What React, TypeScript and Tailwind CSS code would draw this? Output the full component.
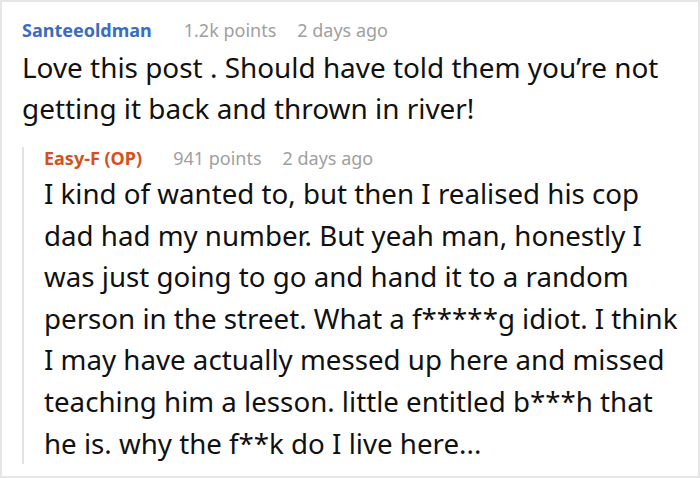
import React from 'react';

const font = { fontFamily: '"Noto Sans", "Open Sans", sans-serif' };

const App: React.FC = () => {
  return (
    <div className="w-[700px] h-[478px] bg-white border-2 border-[#e6e6e6] overflow-hidden" style={font}>
      <div className="pl-[20px] pt-[14px] pr-2">
        {/* Top comment */}
        <div className="flex items-baseline text-[18px] leading-[28px]">
          <span className="font-bold text-[#3b6cc2]">Santeeoldman</span>
          <span className="ml-[32px] text-[#a0a0a0]">1.2k points</span>
          <span className="ml-[21px] text-[#a0a0a0]">2 days ago</span>
        </div>
        <p className="mt-[3px] text-[27.9px] leading-[41px] text-[#111]">
          Love this post . Should have told them you’re not getting it back and thrown in river!
        </p>

        {/* Reply */}
        <div className="mt-[18px] border-l-2 border-[#e3e3e3] pl-[20px]">
          <div className="flex items-baseline text-[18px] leading-[22px]">
            <span className="font-bold text-[#d4501c]">Easy-F (OP)</span>
            <span className="ml-[31px] text-[#a0a0a0]">941 points</span>
            <span className="ml-[21px] text-[#a0a0a0]">2 days ago</span>
          </div>
          <p className="mt-[4px] text-[27.7px] leading-[41.6px] text-[#111]">
            I kind of wanted to, but then I realised his cop dad had my number. But yeah man, honestly I was just going to go and hand it to a random person in the street. What a f*****g idiot. I think I may have actually messed up here and missed teaching him a lesson. little entitled b***h that he is. why the f**k do I live here...
          </p>
        </div>
      </div>
    </div>
  );
};

export default App;
